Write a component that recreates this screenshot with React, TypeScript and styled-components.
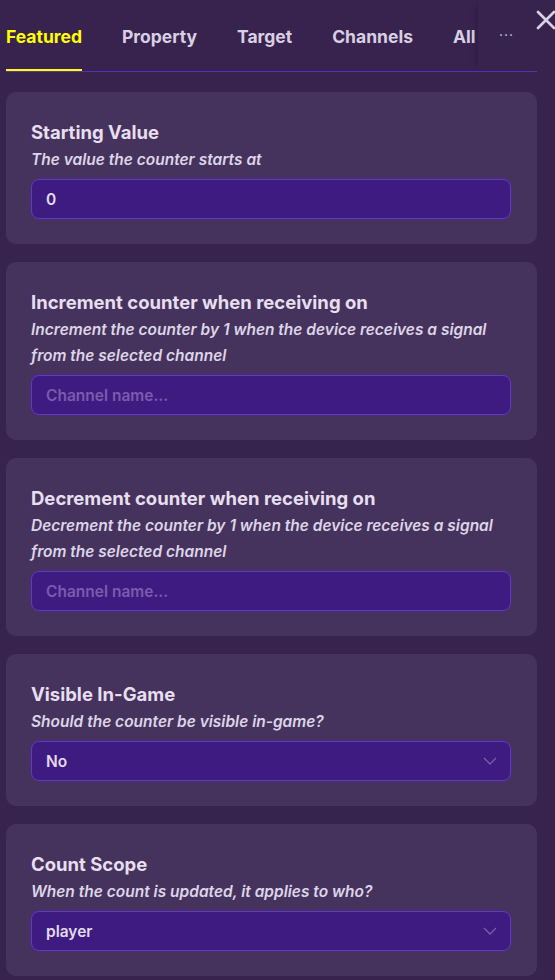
import styled, { createGlobalStyle } from "styled-components";

const GlobalStyle = createGlobalStyle`
  html, body {
    margin: 0;
    padding: 0;
    background: #38234f;
  }
  body {
    font-family: Inter, "Liberation Sans", Arial, sans-serif;
    width: 555px;
    height: 980px;
    overflow: hidden;
  }
`;

type Field = {
  title: string;
  description: string;
  kind: "text" | "select";
  value?: string;
  placeholder?: string;
};

const fields: Field[] = [
  {
    title: "Starting Value",
    description: "The value the counter starts at",
    kind: "text",
    value: "0",
  },
  {
    title: "Increment counter when receiving on",
    description:
      "Increment the counter by 1 when the device receives a signal from the selected channel",
    kind: "text",
    placeholder: "Channel name...",
  },
  {
    title: "Decrement counter when receiving on",
    description:
      "Decrement the counter by 1 when the device receives a signal from the selected channel",
    kind: "text",
    placeholder: "Channel name...",
  },
  {
    title: "Visible In-Game",
    description: "Should the counter be visible in-game?",
    kind: "select",
    value: "No",
  },
  {
    title: "Count Scope",
    description: "When the count is updated, it applies to who?",
    kind: "select",
    value: "player",
  },
];

const tabs = ["Featured", "Property", "Target", "Channels", "All Options"];

const App = () => {
  return (
    <>
      <GlobalStyle />
      <Panel>
        <CloseButton aria-label="close">
          <svg width="20" height="20" viewBox="0 0 20 20">
            <path
              d="M2 2 L18 18 M18 2 L2 18"
              stroke="#d9d2e2"
              strokeWidth="2.6"
              strokeLinecap="round"
            />
          </svg>
        </CloseButton>
        <TabBar>
          <TabList>
            {tabs.map((t, i) => (
              <Tab key={t} $active={i === 0} $clipped={i === tabs.length - 1}>
                {t}
              </Tab>
            ))}
          </TabList>
          <MoreButton>
            <span>···</span>
          </MoreButton>
        </TabBar>
        <Cards>
          {fields.map((f) => (
            <Card key={f.title}>
              <Title>{f.title}</Title>
              <Description>{f.description}</Description>
              <InputBox $empty={!f.value}>
                <span>{f.value ?? f.placeholder}</span>
                {f.kind === "select" ? (
                  <svg width="14" height="8" viewBox="0 0 14 8">
                    <path
                      d="M1 1 L7 7 L13 1"
                      fill="none"
                      stroke="#7b5cae"
                      strokeWidth="1.3"
                    />
                  </svg>
                ) : null}
              </InputBox>
            </Card>
          ))}
        </Cards>
      </Panel>
    </>
  );
};

export default App;

const Panel = styled.div`
  position: relative;
  padding-left: 6px;
  width: 531px;
`;

const CloseButton = styled.div`
  position: absolute;
  top: 10px;
  left: 536px;
  width: 20px;
  height: 20px;
  svg {
    display: block;
  }
`;

const TabBar = styled.div`
  display: flex;
  height: 72px;
  box-sizing: border-box;
  border-bottom: 1px solid #5a2fb8;
`;

const TabList = styled.div`
  display: flex;
  gap: 40px;
  width: 472px;
  overflow: hidden;
  flex-shrink: 0;
`;

const Tab = styled.div<{ $active?: boolean; $clipped?: boolean }>`
  flex-shrink: 0;
  box-sizing: border-box;
  height: 72px;
  padding-top: 25px;
  font-size: 17.5px;
  line-height: 24px;
  font-weight: 700;
  white-space: nowrap;
  color: ${(p) => (p.$active ? "#ffff00" : "#d8d0e2")};
  box-shadow: ${(p) => (p.$active ? "inset 0 -3px 0 #ffff00" : "none")};
  ${(p) => (p.$clipped ? "max-width: 26px; overflow: hidden;" : "")}
`;

const MoreButton = styled.div`
  flex: 1;
  display: flex;
  justify-content: center;
  padding-top: 24px;
  box-shadow: -5px 0 6px -4px rgba(20, 10, 35, 0.3);
  span {
    color: #cfc7da;
    font-size: 14px;
    letter-spacing: 1px;
    line-height: 22px;
    margin-right: 2px;
  }
`;

const Cards = styled.div`
  display: flex;
  flex-direction: column;
  gap: 18.5px;
  margin-top: 20px;
`;

const Card = styled.div`
  background: #46335d;
  border-radius: 10px;
  padding: 28px 26px 24.5px 25px;
`;

const Title = styled.div`
  color: #e7dfef;
  font-size: 18.5px;
  line-height: 24px;
  font-weight: 700;
`;

const Description = styled.div`
  margin-top: 3px;
  color: #ddd5e7;
  font-size: 15.5px;
  line-height: 26px;
  font-style: italic;
  font-weight: 600;
`;

const InputBox = styled.div<{ $empty?: boolean }>`
  margin-top: 6px;
  box-sizing: border-box;
  height: 40px;
  display: flex;
  align-items: center;
  justify-content: space-between;
  padding: 0 13px 0 14px;
  background: #3e1b80;
  border: 1px solid #6434d4;
  border-radius: 8px;
  font-size: 15.5px;
  font-weight: 600;
  color: ${(p) => (p.$empty ? "#7a5bae" : "#e2dbec")};
`;
